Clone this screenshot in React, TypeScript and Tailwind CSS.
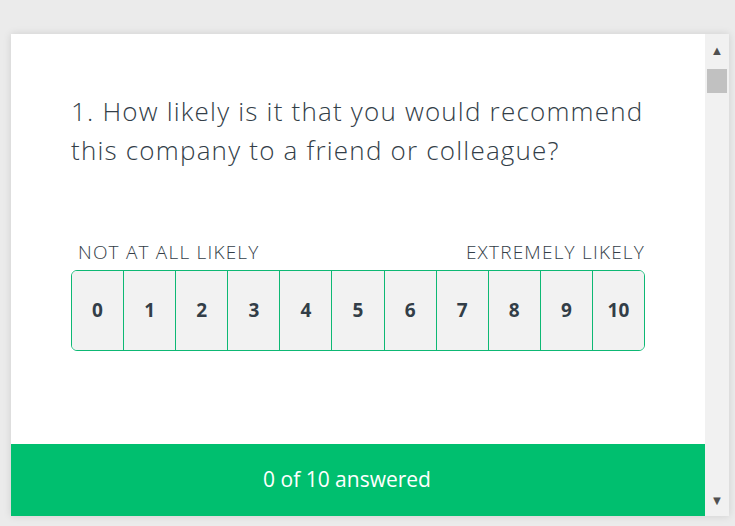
const scores = [0, 1, 2, 3, 4, 5, 6, 7, 8, 9, 10];

export default function App() {
  return (
    <div className="h-[526px] w-[735px] overflow-hidden bg-[#ebebeb] pl-[11px] pt-[34px] font-['Open_Sans',sans-serif]">
      <div className="flex h-[482px] w-[718px] bg-white shadow-[0_0_8px_rgba(0,0,0,0.12)]">
        {/* Survey body */}
        <div className="flex w-[694px] flex-col">
          <div className="flex-1 px-[60px] pt-[58px]">
            <h1 className="text-[26px] font-light leading-[39px] tracking-[1.2px] text-[#333e48]">
              1. How likely is it that you would recommend this company to a friend or colleague?
            </h1>

            <div className="mt-[70px] flex justify-between pl-[7px] text-[19px] font-light leading-[24px] tracking-[1.2px] text-[#333e48]">
              <span>NOT AT ALL LIKELY</span>
              <span>EXTREMELY LIKELY</span>
            </div>

            <div className="mt-[6px] flex h-[81px] w-[574px] overflow-hidden rounded-[6px] border border-[#0db874]">
              {scores.map((n, i) => (
                <button
                  key={n}
                  className={`flex flex-1 items-center justify-center bg-[#f2f2f2] text-[19px] font-bold text-[#333e48] ${
                    i > 0 ? "border-l-[1.5px] border-[#0db874]" : ""
                  }`}
                >
                  {n}
                </button>
              ))}
            </div>
          </div>

          {/* Progress footer */}
          <div className="flex h-[72px] items-center justify-center bg-[#00bf6f] pr-[22px] text-[21px] text-white">
            0 of 10 answered
          </div>
        </div>

        {/* Scrollbar */}
        <div className="flex w-[24px] flex-col items-center bg-[#f1f1f1]">
          <div className="flex h-[24px] items-end justify-center text-[13px] leading-[16px] text-[#505050]">▲</div>
          <div className="mt-[11px] h-[24px] w-[20px] bg-[#c1c1c1]" />
          <div className="flex-1" />
          <div className="flex h-[24px] items-start justify-center text-[13px] leading-[16px] text-[#505050]">▼</div>
        </div>
      </div>
    </div>
  );
}
